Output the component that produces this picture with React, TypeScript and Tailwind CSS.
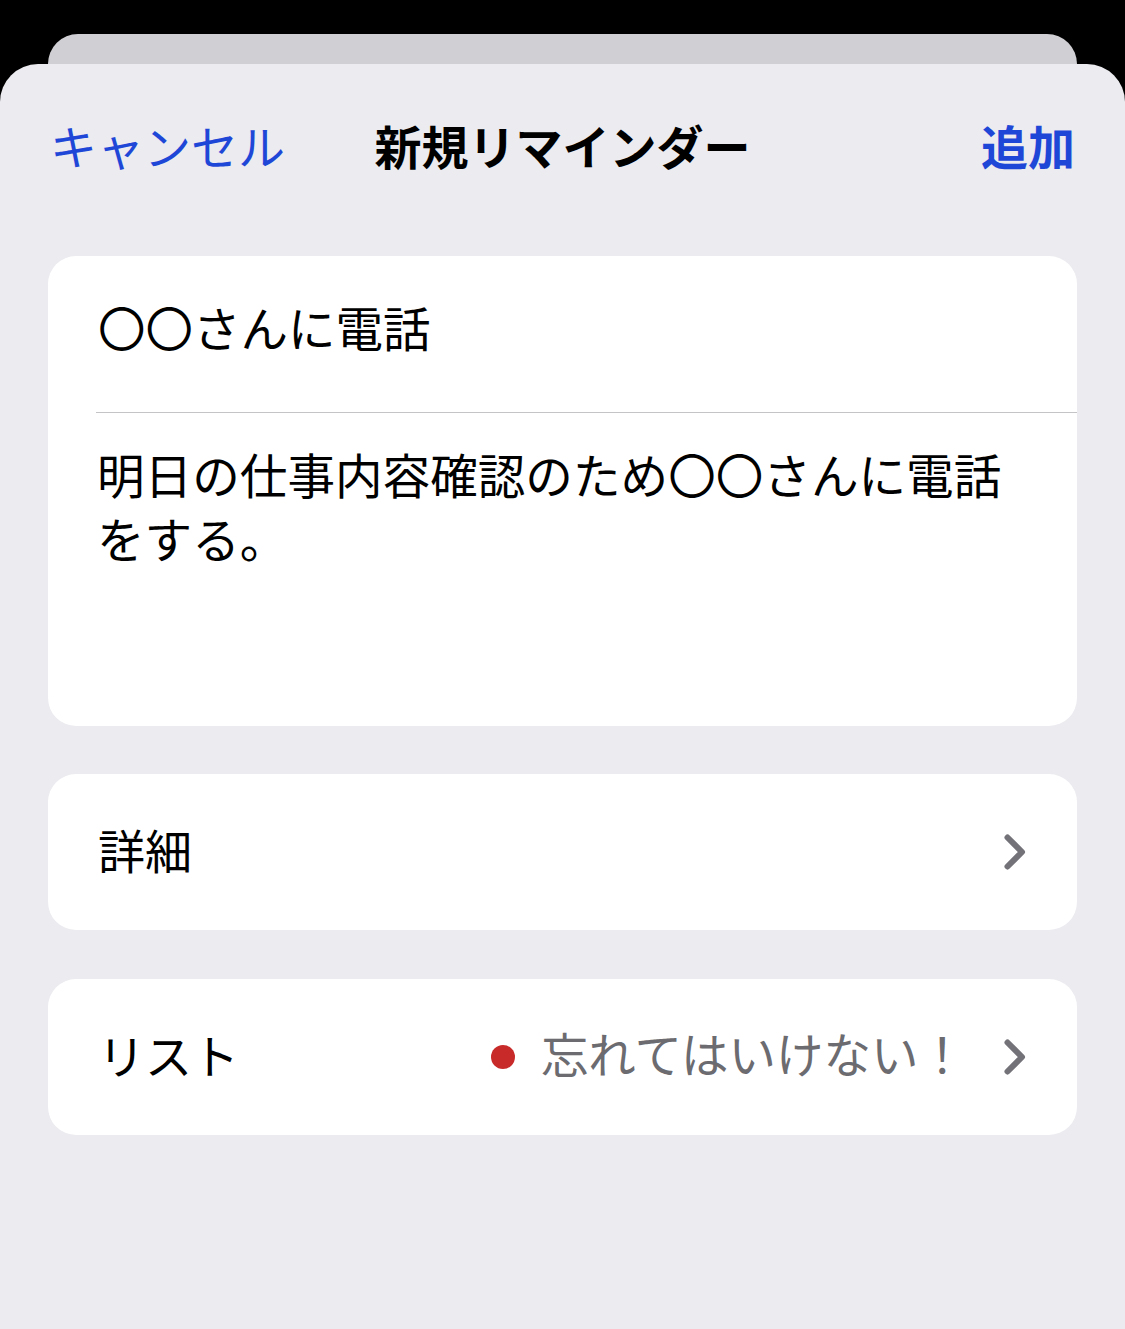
import React from 'react'

const FONT = '"Hiragino Sans", "Noto Sans CJK JP", "Noto Sans", sans-serif'

function Chevron() {
  return (
    <svg width="22" height="36" viewBox="0 0 22 36" className="shrink-0">
      <path d="M3.5 3.5 L18 18 L3.5 32.5" fill="none" stroke="#727278" strokeWidth="6" strokeLinecap="round" strokeLinejoin="round" />
    </svg>
  )
}

export default function App() {
  return (
    <div className="w-[1125px] h-[1329px] bg-black flex flex-col overflow-hidden" style={{ fontFamily: FONT }}>
      {/* stacked sheet behind */}
      <div className="mx-[48px] mt-[34px] h-[30px] shrink-0 bg-[#cfcfd4] rounded-t-[30px]" />

      {/* front sheet */}
      <div className="flex-1 bg-[#ebebf0] rounded-t-[38px] flex flex-col">
        {/* nav */}
        <div className="mt-[32px] h-[96px] px-[50px] grid grid-cols-[1fr_auto_1fr] items-center text-[47px] leading-none">
          <span className="text-[#1f47d7] justify-self-start">キャンセル</span>
          <span className="font-bold text-black">新規リマインダー</span>
          <span className="font-bold text-[#1f47d7] justify-self-end">追加</span>
        </div>

        {/* title + notes */}
        <div className="mx-[48px] mt-[64px] bg-white rounded-[28px] h-[470px] flex flex-col overflow-hidden">
          <div className="h-[156px] shrink-0 pl-[50px] pb-[14px] flex items-center text-[47.5px] leading-none text-black">
            〇〇さんに電話
          </div>
          <div className="ml-[48px] h-px bg-[#c4c4c6]" />
          <div className="pt-[29px] pl-[49px] pr-[50px] text-[47.6px] leading-[64px] text-black">
            明日の仕事内容確認のため〇〇さんに電話をする。
          </div>
        </div>

        {/* details */}
        <div className="mx-[48px] mt-[48px] bg-white rounded-[28px] h-[156px] pl-[50px] pr-[51px] flex items-center justify-between">
          <span className="mb-[8px] text-[47px] leading-none text-black">詳細</span>
          <Chevron />
        </div>

        {/* list */}
        <div className="mx-[48px] mt-[49px] bg-white rounded-[28px] h-[156px] pl-[50px] pr-[51px] flex items-center justify-between">
          <span className="mb-[8px] text-[47px] leading-none text-black">リスト</span>
          <div className="flex items-center">
            <span className="w-[24px] h-[24px] rounded-full bg-[#c82a2a] shrink-0" />
            <span className="mb-[8px] ml-[26px] mr-[38px] text-[47.5px] leading-none text-[#6b6b70]">忘れてはいけない！</span>
            <Chevron />
          </div>
        </div>
      </div>
    </div>
  )
}
